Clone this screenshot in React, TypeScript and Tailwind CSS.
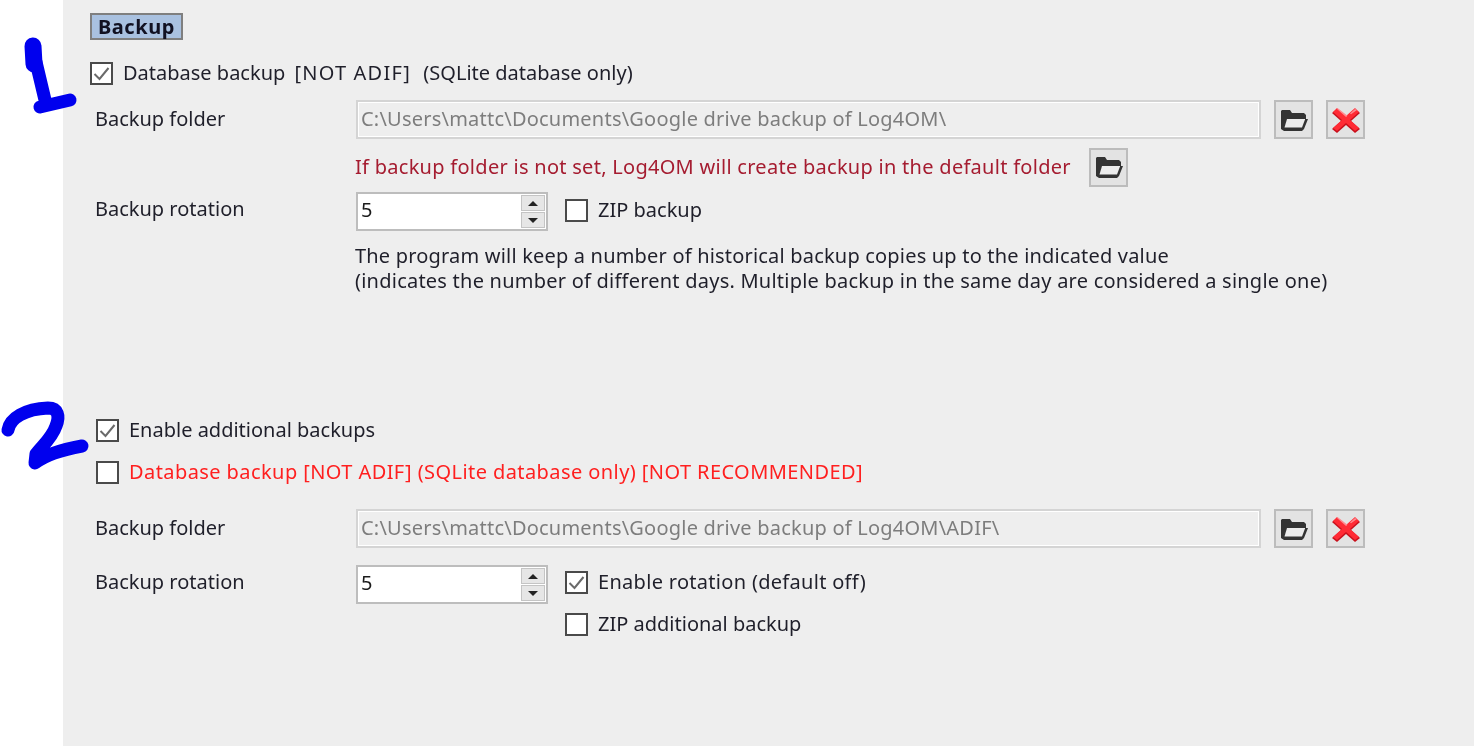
import type { ReactNode } from 'react';

function FolderIcon() {
  return (
    <svg width="28" height="22" viewBox="0 0 28 22">
      <path fill="#333" d="M2 1h8l2 3h12l2 2v4h2l-4 10-2 2H4l-3-2V2z" />
      <path fill="#ececec" d="M7 10h18v0.5L22 18.500H4.500z" />
    </svg>
  );
}

function CrossIcon() {
  return (
    <svg width="30" height="28" viewBox="0 0 30 28">
      <path fill="#c8101c" d="M6 3l9 8 9-8 5 4-9 8 9 8-5 4-9-8-9 8-5-4 9-8-9-8z" />
      <path fill="#ff2b35" d="M6 2l9 8 9-8 4 4-9 8 9 8-4 3-9-8-9 8-4-3 9-8-9-8z" />
      <path fill="#ff8a90" d="M6 3l9 8 1.500-1.300L6.500 2zM24 3l-5 4.500 1 .8L26 4z" />
    </svg>
  );
}

function IconButton({ children }: { children: ReactNode }) {
  return (
    <button type="button" className="w-[39px] h-[39px] flex items-center justify-center shrink-0 bg-[#e3e3e3] border-2 border-[#bcbcbc]">
      {children}
    </button>
  );
}

function CheckBox({ checked }: { checked?: boolean }) {
  return (
    <span className="w-[23px] h-[23px] shrink-0 flex items-center justify-center bg-white border-2 border-[#4a4a4a]">
      {checked && (
        <svg width="17" height="15" viewBox="0 0 17 15">
          <path d="M1.500 8l5 5 9-11" fill="none" stroke="#6a6a6a" strokeWidth="2" />
        </svg>
      )}
    </span>
  );
}

function CheckRow({ checked, color, children }: { checked?: boolean; color?: string; children: ReactNode }) {
  return (
    <label className={`flex items-center gap-[10px] h-[23px] ${color ?? 'text-[#1f1f2a]'}`}>
      <CheckBox checked={checked} />
      <span className="pb-[2px] whitespace-nowrap">{children}</span>
    </label>
  );
}

function FolderRow({ path }: { path: string }) {
  return (
    <div className="flex items-center h-[39px]">
      <span className="w-[293px] pl-[32px] pb-[2px] shrink-0">Backup folder</span>
      <div className="w-[905px] h-[39px] flex items-center pl-[3px] pb-[2px] tracking-[0.22px] text-[#7d7d7d] bg-[#eeeeee] border-2 border-[#d4d4d4] shadow-[inset_0_0_0_1px_#fff]">
        {path}
      </div>
      <div className="ml-[13px] flex gap-[13px]">
        <IconButton><FolderIcon /></IconButton>
        <IconButton><CrossIcon /></IconButton>
      </div>
    </div>
  );
}

function Spinner() {
  return (
    <div className="w-[192px] h-[39px] flex justify-between bg-white border-2 border-[#bdbdbd]">
      <span className="pl-[3px] leading-[32px] text-[#1a1a1a]">5</span>
      <div className="w-[26px] flex flex-col gap-[1px] p-[1px]">
        <span className="flex-1 flex items-center justify-center bg-[#e6e6e6] border border-[#c4c4c4]">
          <span className="w-0 h-0 border-x-[5px] border-x-transparent border-b-[5px] border-b-[#222]" />
        </span>
        <span className="flex-1 flex items-center justify-center bg-[#e6e6e6] border border-[#c4c4c4]">
          <span className="w-0 h-0 border-x-[5px] border-x-transparent border-t-[5px] border-t-[#222]" />
        </span>
      </div>
    </div>
  );
}

export default function App() {
  return (
    <div className="relative flex w-[1474px] h-[746px] overflow-hidden bg-white text-[20px] leading-[26px] text-[#1f1f2a] font-['Noto_Sans','Open_Sans',sans-serif] blur-[0.4px]">
      <div className="w-[63px] shrink-0 bg-white" />
      <main className="flex-1 bg-[#eeeeee] pt-[13px]">
        <div className="ml-[27px] w-[93px] h-[27px] flex items-center justify-center font-bold tracking-[0.6px] bg-[#a9c1e0] border-2 border-[#7f7f7f] text-[#111122]">
          Backup
        </div>

        <div className="ml-[27px] mt-[22px]">
          <CheckRow checked>
            Database backup <span className="ml-[4px] mr-[7px] tracking-[1.2px]">[NOT ADIF]</span> (SQLite database only)
          </CheckRow>
        </div>

        <div className="mt-[15px]">
          <FolderRow path="C:\Users\mattc\Documents\Google drive backup of Log4OM\" />
        </div>

        <div className="mt-[9px] ml-[292px] h-[38px] flex items-center text-[#a51c30]">
          <span className="w-[734px] shrink-0 tracking-[0.28px]">If backup folder is not set, Log4OM will create backup in the default folder</span>
          <IconButton><FolderIcon /></IconButton>
        </div>

        <div className="mt-[6px] flex items-center h-[39px]">
          <span className="w-[293px] pl-[32px] pb-[5px] shrink-0">Backup rotation</span>
          <Spinner />
          <div className="ml-[17px] mb-[2px]">
            <CheckRow>ZIP backup</CheckRow>
          </div>
        </div>

        <div className="mt-[12px] ml-[292px] leading-[25px]">
          <p className="tracking-[0.19px]">The program will keep a number of historical backup copies up to the indicated value</p>
          <p className="tracking-[0.23px]">(indicates the number of different days. Multiple backup in the same day are considered a single one)</p>
        </div>

        <div className="mt-[126px] ml-[33px]">
          <CheckRow checked>Enable additional backups</CheckRow>
        </div>
        <div className="mt-[19px] ml-[33px]">
          <CheckRow color="text-[#ff1f1f]">
            <span className="tracking-[0.42px]">Database backup [NOT ADIF] (SQLite database only) [NOT RECOMMENDED]</span>
          </CheckRow>
        </div>

        <div className="mt-[25px]">
          <FolderRow path="C:\Users\mattc\Documents\Google drive backup of Log4OM\ADIF\" />
        </div>

        <div className="mt-[17px] flex items-start">
          <span className="w-[293px] pl-[32px] shrink-0 leading-[33px]">Backup rotation</span>
          <Spinner />
          <div className="ml-[17px] mt-[6px] flex flex-col gap-[19px]">
            <CheckRow checked><span className="tracking-[0.3px]">Enable rotation (default off)</span></CheckRow>
            <CheckRow>ZIP additional backup</CheckRow>
          </div>
        </div>
      </main>

      {/* handwritten numbers drawn over the screenshot */}
      <svg className="absolute left-0 top-0 pointer-events-none" width="90" height="480" viewBox="0 0 90 480">
        <g fill="none" stroke="#0000ee" strokeLinecap="round" strokeLinejoin="round">
          <path strokeWidth="17" d="M33 46L34 64" />
          <path strokeWidth="13" d="M36 62L45 100M40 107L70 100" />
          <path strokeWidth="13" d="M8 430C10 418 25 409 48 408C58 408 60 416 56 426C52 438 42 446 36 454L35 463C45 455 60 450 82 446" />
        </g>
      </svg>
    </div>
  );
}
